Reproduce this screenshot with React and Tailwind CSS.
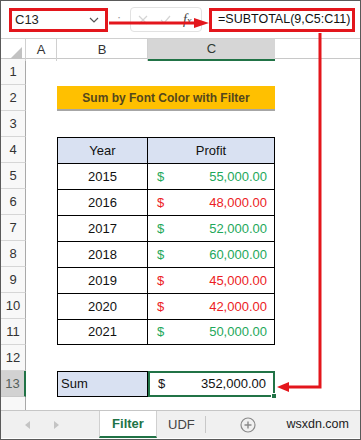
import React from "react";

const GREEN = "text-[#1ea85a]";
const RED = "text-[#ec1c24]";

const data = [
  { y: "2015", v: "55,000.00", up: true },
  { y: "2016", v: "48,000.00", up: false },
  { y: "2017", v: "52,000.00", up: true },
  { y: "2018", v: "60,000.00", up: true },
  { y: "2019", v: "45,000.00", up: false },
  { y: "2020", v: "42,000.00", up: false },
  { y: "2021", v: "50,000.00", up: true },
];

const ROW = "grid grid-cols-[25px_31px_91px_127px_1fr] h-[26px]";

function RowHead({ n, active }) {
  if (active) {
    return (
      <div className="flex items-center justify-center bg-[#d2d2d2] border-r-2 border-r-[#217346] border-b border-b-[#c8c8c8] text-[#55605a] text-[13px]">
        {n}
      </div>
    );
  }
  return (
    <div className="flex items-center justify-center bg-[#f8f8f8] border-r border-r-[#a9a9a9] border-b border-b-[#d6d6d6] text-[#333] text-[13px]">
      {n}
    </div>
  );
}

function FormulaBar() {
  return (
    <div className="flex items-center h-[38px] pl-[8px] bg-white border-b border-[#d0d0d0]">
      <div className="flex items-center justify-between w-[99px] h-[24px] border-[3px] border-[#e3161c] bg-white pl-[3px] pr-[6px] text-[13px] text-[#222]">
        <span>C13</span>
        <svg width="10" height="6" viewBox="0 0 10 6">
          <path d="M1 1l4 4 4-4" fill="none" stroke="#555" strokeWidth="1.2" />
        </svg>
      </div>
      <div className="w-[22px] text-center text-[#9a9a9a] text-[13px]">:</div>
      <div className="flex items-center gap-[12px] w-[72px] h-[25px] rounded-[4px] border border-[#e2e2e2] pl-[7px]">
        <svg width="10" height="10" viewBox="0 0 10 10">
          <path d="M1 1l8 8M9 1l-8 8" stroke="#d4d4d4" strokeWidth="1.2" />
        </svg>
        <svg width="11" height="9" viewBox="0 0 11 9">
          <path d="M1 5l3 3 6-7" fill="none" stroke="#d4d4d4" strokeWidth="1.2" />
        </svg>
        <span className="italic text-[14px] text-[#444] font-['Liberation_Serif',serif]">
          f<span className="text-[10px]">x</span>
        </span>
      </div>
      <div className="ml-[7px] flex items-center w-[146px] h-[24px] border-[3px] border-[#e3161c] pl-[6px] text-[12.5px] text-[#111] whitespace-nowrap">
        =SUBTOTAL(9,C5:C11)
      </div>
    </div>
  );
}

function ColumnHeads() {
  return (
    <div className="grid grid-cols-[25px_31px_91px_127px_1fr] h-[20px] bg-white border-b border-[#c8c8c8] text-[13px] text-[#333]">
      <div className="relative border-r border-[#d0d0d0]">
        <div className="absolute right-[3px] bottom-[2px] w-0 h-0 border-l-[12px] border-l-transparent border-b-[12px] border-b-[#c2c2c2]" />
      </div>
      <div className="flex items-center justify-center border-r border-[#d0d0d0]">A</div>
      <div className="flex items-center justify-center border-r border-[#d0d0d0]">B</div>
      <div className="flex items-center justify-center bg-[#d6d6d6] border-b-2 border-[#217346] text-[#2f3a33]">C</div>
      <div />
    </div>
  );
}

function Sheet() {
  return (
    <div className="text-[12.5px] text-[#111]">
      <div className={ROW}>
        <RowHead n={1} />
      </div>
      <div className={ROW}>
        <RowHead n={2} />
        <div />
        <div className="col-span-2 mt-px flex items-center justify-center bg-[#ffc000] border-b-2 border-[#a6a6a6] font-bold text-[12px] text-[#54471c]">
          Sum by Font Color with Filter
        </div>
      </div>
      <div className={ROW}>
        <RowHead n={3} />
      </div>
      <div className={ROW}>
        <RowHead n={4} />
        <div />
        <div className="flex items-center justify-center bg-[#d9e1f2] border-t border-l border-r border-black text-[13px]">Year</div>
        <div className="flex items-center justify-center bg-[#d9e1f2] border-t border-r border-black text-[13px]">Profit</div>
      </div>
      {data.map((r, i) => (
        <div key={r.y} className={ROW}>
          <RowHead n={5 + i} />
          <div />
          <div className={`flex items-center justify-center border-t border-l border-r border-black text-[13px] ${i === data.length - 1 ? "border-b" : ""}`}>
            {r.y}
          </div>
          <div className={`flex items-center justify-between pl-[9px] pr-[7px] border-t border-r border-black text-[13px] ${r.up ? GREEN : RED} ${i === data.length - 1 ? "border-b" : ""}`}>
            <span>$</span>
            <span>{r.v}</span>
          </div>
        </div>
      ))}
      <div className={ROW}>
        <RowHead n={12} />
      </div>
      <div className={ROW}>
        <RowHead n={13} active />
        <div />
        <div className="flex items-center pl-[3px] bg-[#d9e1f2] border border-black text-[13px]">Sum</div>
        <div className="relative flex items-center justify-between pl-[8px] pr-[7px] border-2 border-[#217346] text-[13px] text-[#111]">
          <span>$</span>
          <span>352,000.00</span>
          <div className="absolute -right-[4px] -bottom-[4px] w-[6px] h-[6px] bg-[#217346] border border-white" />
        </div>
      </div>
      <div className="grid grid-cols-[25px_1fr] h-[13px]">
        <div className="bg-[#f8f8f8] border-r border-[#a9a9a9]" />
        <div />
      </div>
    </div>
  );
}

function Tabs() {
  return (
    <div className="flex items-stretch h-[28px] bg-[#f0f0f0] border-t border-[#c6c6c6] text-[13px]">
      <div className="flex items-center w-[98px] pl-[24px] gap-[24px]">
        <div className="w-0 h-0 border-y-[4px] border-y-transparent border-r-[5px] border-r-[#c4c4c4]" />
        <div className="w-0 h-0 border-y-[4px] border-y-transparent border-l-[5px] border-l-[#c4c4c4]" />
      </div>
      <div className="flex items-center justify-center w-[58px] bg-white border-x border-[#d0d0d0] border-b-2 border-b-[#217346] font-bold text-[#217346]">
        Filter
      </div>
      <div className="flex items-center pl-[11px] w-[48px] text-[#444]">UDF</div>
      <div className="my-[5px] w-px bg-[#c8c8c8]" />
      <div className="flex items-center pl-[34px]">
        <svg width="16" height="16" viewBox="0 0 16 16">
          <circle cx="8" cy="8" r="7" fill="none" stroke="#8a8a8a" strokeWidth="1.2" />
          <path d="M8 4.5v7M4.5 8h7" stroke="#8a8a8a" strokeWidth="1.4" />
        </svg>
      </div>
      <div className="flex items-center ml-auto pr-[11px] text-[12.5px] text-[#222]">wsxdn.com</div>
    </div>
  );
}

export default function App() {
  return (
    <div className="relative w-[361px] h-[440px] overflow-hidden bg-white border border-[#5a5a5a] font-['Liberation_Sans',Arial,sans-serif]">
      <FormulaBar />
      <ColumnHeads />
      <Sheet />
      <Tabs />
      {/* callout arrows */}
      <svg className="absolute left-0 top-0 pointer-events-none" width="361" height="440" viewBox="0 0 361 440">
        <path d="M108 22H195" stroke="#e3161c" strokeWidth="3" />
        <polygon points="193,17 208,22 193,27" fill="#e3161c" />
        <path d="M319 32V386H286" fill="none" stroke="#e3161c" strokeWidth="3" />
        <polygon points="288,381 276,386 288,391" fill="#e3161c" />
      </svg>
    </div>
  );
}
